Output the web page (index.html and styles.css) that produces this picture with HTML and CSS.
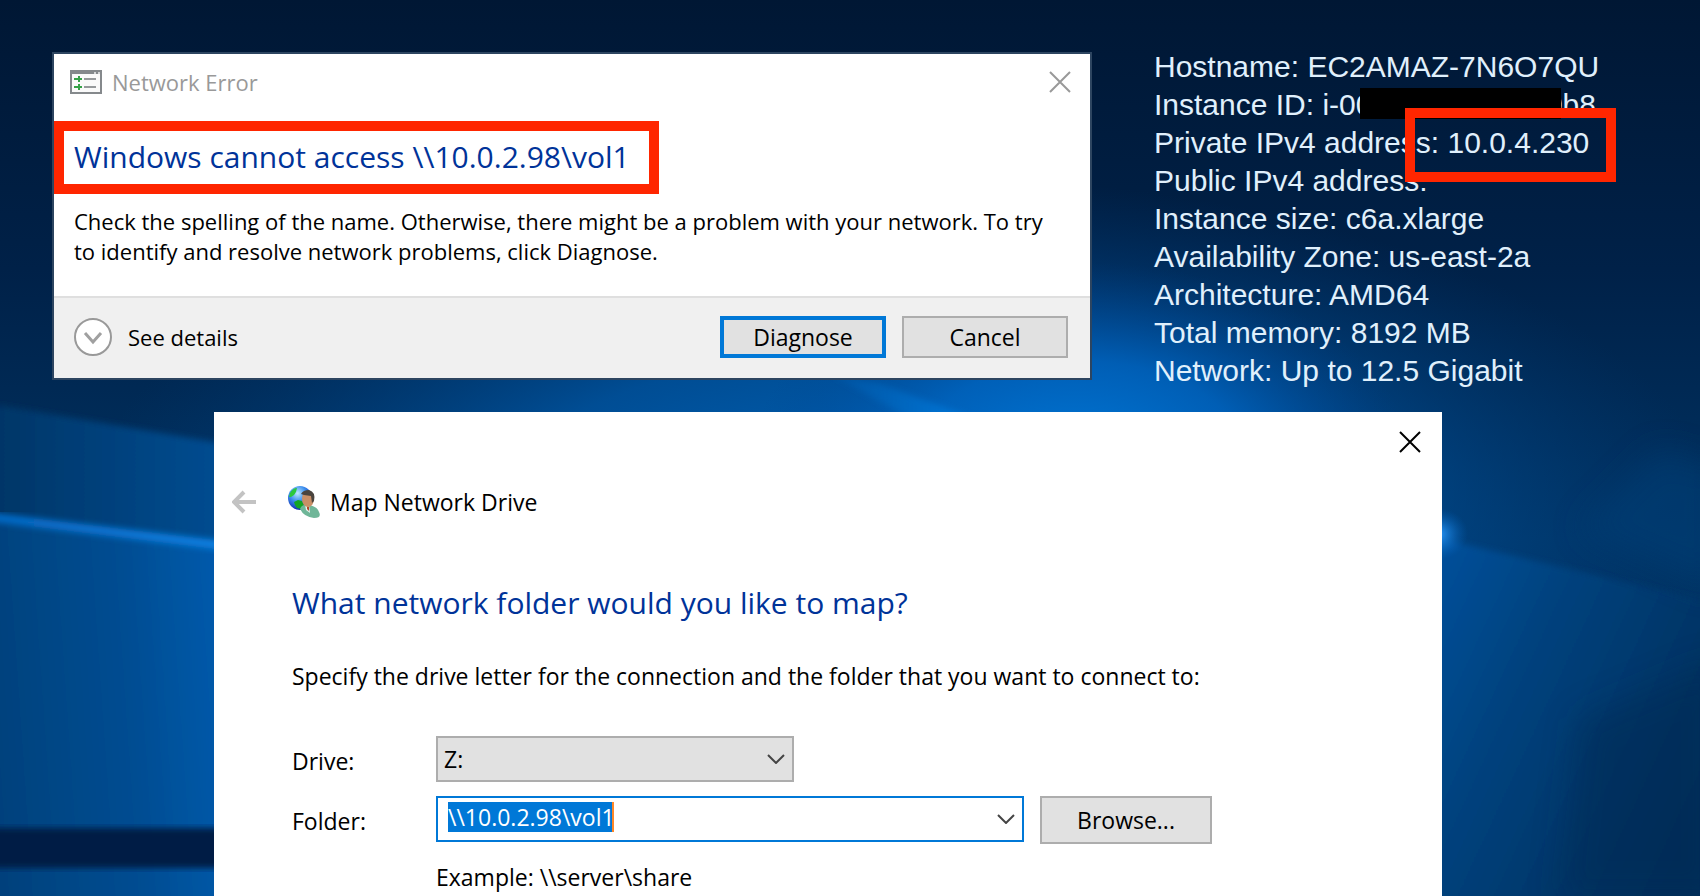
FILE: index.html
```
<!DOCTYPE html>
<html lang="en">
<head>
    <meta charset="UTF-8">
    <meta name="viewport" content="width=device-width, initial-scale=1.0">
    <title>Map Network Drive</title>
    <link rel="stylesheet" href="styles.css">
</head>
<body>
    <main class="desktop">
        <svg class="wallpaper" viewBox="0 0 1700 896" preserveAspectRatio="none" aria-hidden="true">
            <defs>
                <linearGradient id="sky" x1="0" y1="0" x2="0" y2="1">
                    <stop offset="0" stop-color="#001734"/>
                    <stop offset="0.3" stop-color="#002148"/>
                    <stop offset="0.6" stop-color="#003363"/>
                    <stop offset="1" stop-color="#003668"/>
                </linearGradient>
                <radialGradient id="haze" gradientUnits="userSpaceOnUse" cx="900" cy="520" r="820" gradientTransform="translate(900 520) scale(1 0.42) translate(-900 -520)">
                    <stop offset="0" stop-color="#0068c0"/>
                    <stop offset="0.5" stop-color="#0056a4" stop-opacity="0.8"/>
                    <stop offset="1" stop-color="#003c78" stop-opacity="0"/>
                </radialGradient>
                <radialGradient id="glow" gradientUnits="userSpaceOnUse" cx="1080" cy="460" r="330" gradientTransform="translate(1080 460) scale(1 0.6) translate(-1080 -460)">
                    <stop offset="0" stop-color="#0078d7"/>
                    <stop offset="0.5" stop-color="#0066c4" stop-opacity="0.7"/>
                    <stop offset="1" stop-color="#00408a" stop-opacity="0"/>
                </radialGradient>
                <linearGradient id="beam" x1="0" y1="0" x2="1" y2="0">
                    <stop offset="0" stop-color="#003464"/>
                    <stop offset="1" stop-color="#005098"/>
                </linearGradient>
                <linearGradient id="floor" x1="0" y1="0.1" x2="1" y2="0">
                    <stop offset="0" stop-color="#00417c"/>
                    <stop offset="0.5" stop-color="#004d92"/>
                    <stop offset="1" stop-color="#0060b8"/>
                </linearGradient>
                <linearGradient id="ray" x1="0" y1="0" x2="1" y2="0">
                    <stop offset="0" stop-color="#0668c4"/>
                    <stop offset="1" stop-color="#0a86ea"/>
                </linearGradient>
                <linearGradient id="streak" x1="0" y1="0" x2="1" y2="0">
                    <stop offset="0" stop-color="#0060b4" stop-opacity="0.3"/>
                    <stop offset="1" stop-color="#007ce0"/>
                </linearGradient>
                <linearGradient id="right" x1="0" y1="0" x2="1" y2="0.6">
                    <stop offset="0" stop-color="#0052a0"/>
                    <stop offset="0.4" stop-color="#00427e"/>
                    <stop offset="1" stop-color="#002e5a"/>
                </linearGradient>
                <radialGradient id="glint">
                    <stop offset="0" stop-color="#2a9aff"/>
                    <stop offset="1" stop-color="#0060b8" stop-opacity="0"/>
                </radialGradient>
                <filter id="soft" x="-10%" y="-10%" width="120%" height="120%"><feGaussianBlur stdDeviation="3"/></filter>
                <filter id="softer" x="-30%" y="-30%" width="160%" height="160%"><feGaussianBlur stdDeviation="16"/></filter>
            </defs>
            <rect width="1700" height="896" fill="url(#sky)"/>
            <rect width="1700" height="896" fill="url(#haze)"/>
            <rect width="1700" height="896" fill="url(#glow)"/>
            <g filter="url(#soft)">
                <path d="M-20 402 L260 450 V920 H-20Z" fill="url(#beam)"/>
                <path d="M-20 516 L260 552 V920 H-20Z" fill="url(#floor)"/>
                <path d="M1420 534 L1720 604 V920 H1420Z" fill="url(#right)"/>
                <path d="M830 374 L880 384 L990 424 H920Z" fill="url(#streak)"/>
            </g>
            <path d="M-20 516 L260 550" stroke="url(#ray)" stroke-width="9" filter="url(#soft)"/>
            <rect x="-20" y="828" width="280" height="40" fill="#001f45" filter="url(#soft)"/>
            <path d="M1580 530 L1660 450 L1720 470 V590Z" fill="#003c74" opacity="0.6" filter="url(#softer)"/>
            <path d="M1580 720 L1720 660 V900 H1560Z" fill="#002a54" opacity="0.5" filter="url(#softer)"/>
            <ellipse cx="1438" cy="534" rx="30" ry="26" fill="url(#glint)"/>
        </svg>

        <div class="top-row">
            <section class="window error-window">
                <header class="title-bar">
                    <svg class="app-icon" viewBox="0 0 32 24" aria-hidden="true">
                        <rect x="1" y="1" width="30" height="22" fill="#fafafa" stroke="#85898c" stroke-width="2"/>
                        <rect width="32" height="4" fill="#85898c"/>
                        <path d="M24 2h2v2h-2zM28 2h2v2h-2z" fill="#d5d7d8"/>
                        <path d="M14 9h12M14 17h12" stroke="#96999b" stroke-width="2"/>
                        <path d="M4 9h8M9 6v6M4 17h8M9 14v6" stroke="#36a248" stroke-width="2"/>
                    </svg>
                    <span class="title">Network Error</span>
                    <button class="close-button muted" type="button" aria-label="Close">
                        <svg viewBox="0 0 22 22"><path d="M1 1l20 20M21 1L1 21"/></svg>
                    </button>
                </header>
                <h1 class="heading highlight">Windows cannot access \\10.0.2.98\vol1</h1>
                <p class="message">Check the spelling of the name. Otherwise, there might be a problem with your network. To try to identify and resolve network problems, click Diagnose.</p>
                <footer class="actions">
                    <button class="details-button" type="button">
                        <svg viewBox="0 0 38 38" aria-hidden="true">
                            <circle cx="19" cy="19" r="18" fill="#fff" stroke="#999" stroke-width="2"/>
                            <path d="M11 15l8 9 8-9" fill="none" stroke="#a0a0a0" stroke-width="3"/>
                        </svg>
                        See details
                    </button>
                    <button class="button primary" type="button">Diagnose</button>
                    <button class="button" type="button">Cancel</button>
                </footer>
            </section>

            <ul class="instance-info">
                <li>Hostname: EC2AMAZ-7N6O7QU</li>
                <li class="instance-id">Instance ID: i-00<span class="redacted"></span><span class="id-end">0b8</span></li>
                <li>Private IPv4 address: 10.0.4.230</li>
                <li>Public IPv4 address:</li>
                <li>Instance size: c6a.xlarge</li>
                <li>Availability Zone: us-east-2a</li>
                <li>Architecture: AMD64</li>
                <li>Total memory: 8192 MB</li>
                <li>Network: Up to 12.5 Gigabit</li>
                <li class="marker" aria-hidden="true"></li>
            </ul>
        </div>

        <section class="window map-window">
            <div class="window-controls">
                <button class="close-button" type="button" aria-label="Close">
                    <svg viewBox="0 0 22 22"><path d="M1 1l20 20M21 1L1 21"/></svg>
                </button>
            </div>
            <header class="wizard-title">
                <button class="back-button" type="button" aria-label="Back">
                    <svg viewBox="0 0 24 24"><path d="M24 12H2M12 2L2 12l10 10"/></svg>
                </button>
                <svg class="drive-icon" viewBox="0 0 32 32" aria-hidden="true">
                    <defs>
                        <radialGradient id="globe" cx="0.4" cy="0.3" r="0.75">
                            <stop offset="0" stop-color="#bfeaff"/>
                            <stop offset="0.45" stop-color="#3d8fee"/>
                            <stop offset="1" stop-color="#0a1fa8"/>
                        </radialGradient>
                    </defs>
                    <circle cx="12" cy="12" r="12" fill="url(#globe)"/>
                    <path d="M2 7Q5 2 9 2L8 6 6 9 3 11 1 11Z" fill="#2cc83c"/>
                    <path d="M6 16L10 14 14 15 16 19 13 23 9 22 7 19Z" fill="#12a524"/>
                    <path d="M12 23Q14 18 20 19Q29 20 31 26Q34 32 26 32Q16 31 12 23Z" fill="#6fb698"/>
                    <path d="M17 19l4 0 1 8-4-3Z" fill="#e8f4ee"/>
                    <path d="M19 20l2 1 0 4-2-2Z" fill="#b5472d"/>
                    <ellipse cx="20" cy="13" rx="6" ry="8" fill="#c98f66"/>
                    <path d="M13 8Q15 4 21 4Q28 6 26 15L24 17 23 10 16 9Z" fill="#4a443e"/>
                </svg>
                <span>Map Network Drive</span>
            </header>
            <form class="map-form">
                <h2 class="heading">What network folder would you like to map?</h2>
                <p class="hint">Specify the drive letter for the connection and the folder that you want to connect to:</p>
                <div class="field-row">
                    <label for="drive">Drive:</label>
                    <div class="drive-select">
                        <select id="drive">
                            <option>Z:</option>
                        </select>
                        <svg class="chevron" viewBox="0 0 18 10" aria-hidden="true"><path d="M1 1l8 8 8-8"/></svg>
                    </div>
                </div>
                <div class="field-row">
                    <label for="folder">Folder:</label>
                    <div class="folder-box">
                        <input id="folder" type="text" value="\\10.0.2.98\vol1">
                        <button class="drop-button" type="button" aria-label="Recent folders">
                            <svg class="chevron" viewBox="0 0 18 10"><path d="M1 1l8 8 8-8"/></svg>
                        </button>
                    </div>
                    <button class="button browse" type="button">Browse...</button>
                </div>
                <p class="example">Example: \\server\share</p>
            </form>
        </section>
    </main>
</body>
</html>
```
FILE: styles.css
```
* {
    box-sizing: border-box;
}
body {
    margin: 0;
    font-family: "Open Sans", "Noto Sans", sans-serif;
    font-size: 23px;
    line-height: 30px;
    color: #000;
}
h1, h2, p, ul {
    margin: 0;
    padding: 0;
    font-weight: 400;
}
button, input, select {
    font: inherit;
    color: inherit;
}
.desktop {
    position: relative;
    display: flex;
    flex-direction: column;
    gap: 32px;
    min-height: 100vh;
    padding-top: 52px;
    overflow: hidden;
    background: #00264d;
}
.wallpaper {
    position: absolute;
    inset: 0;
    width: 100%;
    height: 100%;
}
.window {
    position: relative;
    background: #fff;
}

/* network error dialog */
.top-row {
    position: relative;
    display: flex;
    align-items: flex-start;
    gap: 62px;
    padding: 0 84px 0 52px;
}
.error-window {
    flex: 1;
    border: 2px solid #2d4560;
}
.title-bar {
    display: flex;
    align-items: center;
    height: 56px;
    padding: 0 19px 0 16px;
    font-size: 22px;
    color: #999;
}
.app-icon {
    width: 32px;
    height: 24px;
    margin-right: 10px;
}
.close-button {
    margin-left: auto;
    padding: 0;
    border: none;
    background: none;
    line-height: 0;
}
.close-button svg {
    width: 22px;
    height: 22px;
    stroke: #000;
    stroke-width: 2;
}
.close-button.muted svg {
    stroke: #999;
}
.heading {
    font-size: 30px;
    line-height: 40px;
    color: #003399;
}
.highlight {
    width: fit-content;
    margin-top: 11px;
    padding: 6px 19px 7px 10px;
    border: 10px solid #ff2600;
}
.message {
    padding: 12px 26px 30px 20px;
    font-size: 22px;
}
.actions {
    display: flex;
    align-items: center;
    gap: 16px;
    height: 82px;
    padding: 0 22px 2px 20px;
    border-top: 2px solid #dfdfdf;
    background: #f0f0f0;
}
.details-button {
    display: flex;
    align-items: center;
    gap: 16px;
    margin-right: auto;
    padding: 0;
    border: none;
    background: none;
    font-size: 22px;
}
.details-button svg {
    width: 38px;
    height: 38px;
}
.button {
    width: 166px;
    height: 42px;
    padding: 0;
    border: 2px solid #adadad;
    background: #e1e1e1;
}
.button.primary {
    border: 4px solid #0078d7;
}

/* instance details on the desktop */
.instance-info {
    position: relative;
    width: 462px;
    margin: -4px 0 -12px;
    list-style: none;
    font-family: "Liberation Sans", Arial, sans-serif;
    font-size: 30px;
    line-height: 38px;
    color: #e0f0fc;
    white-space: nowrap;
}
.instance-id {
    display: flex;
    position: relative;
}
.id-end {
    margin-left: auto;
    padding-right: 20px;
}
.redacted {
    position: absolute;
    top: 2px;
    left: 206px;
    width: 201px;
    height: 31px;
    background: #000;
}
.marker {
    position: absolute;
    top: 60px;
    right: 0;
    width: 211px;
    height: 74px;
    border: 10px solid #ff2600;
}

/* map network drive wizard */
.map-window {
    flex: 1;
    margin: 0 258px 0 214px;
}
.window-controls {
    display: flex;
    padding: 19px 21px 0 0;
}
.wizard-title {
    display: flex;
    align-items: center;
    height: 32px;
    margin-top: 33px;
    padding-left: 18px;
}
.back-button {
    margin-right: 32px;
    padding: 0;
    border: none;
    background: none;
    line-height: 0;
}
.back-button svg {
    width: 24px;
    height: 24px;
    fill: none;
    stroke: #c3c3c3;
    stroke-width: 4;
}
.drive-icon {
    width: 32px;
    height: 32px;
    margin-right: 10px;
}
.map-form {
    padding: 65px 230px 0 78px;
}
.hint {
    margin-top: 38px;
}
.field-row {
    display: flex;
    align-items: center;
    height: 46px;
    margin-top: 14px;
}
.hint + .field-row {
    margin-top: 45px;
}
.field-row label {
    width: 144px;
    padding-top: 4px;
}
.drive-select {
    position: relative;
    width: 358px;
}
.drive-select select {
    width: 100%;
    height: 46px;
    padding: 0 6px;
    border: 2px solid #adadad;
    border-radius: 0;
    background: #e1e1e1;
    appearance: none;
}
.chevron {
    width: 18px;
    height: 10px;
    fill: none;
    stroke: #444;
    stroke-width: 2;
}
.drive-select .chevron {
    position: absolute;
    top: 18px;
    right: 9px;
}
.folder-box {
    display: flex;
    align-items: flex-start;
    flex: 1;
    height: 46px;
    padding: 4px 7px 0 10px;
    border: 2px solid #0078d7;
}
.folder-box input {
    width: 166px;
    height: 30px;
    padding: 0;
    border: none;
    border-right: 2px solid #ff8728;
    outline: none;
    background: #0078d7;
    color: #fff;
}
.drop-button {
    margin-left: auto;
    padding: 12px 0 0;
    border: none;
    background: none;
    line-height: 0;
}
.browse {
    width: 172px;
    height: 48px;
    margin: 2px 0 0 16px;
}
.example {
    margin-top: 20px;
    padding-left: 144px;
}
```
